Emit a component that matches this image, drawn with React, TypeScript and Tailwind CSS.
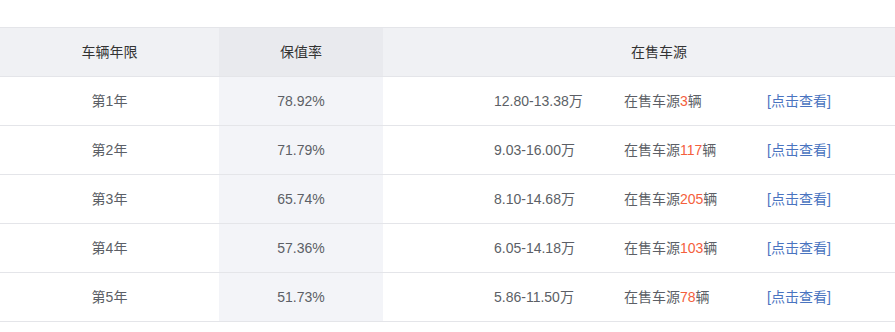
import React from "react";

interface Row {
  year: string;
  rate: string;
  price: string;
  count: string;
}

const ROWS: Row[] = [
  { year: "第1年", rate: "78.92%", price: "12.80-13.38万", count: "3" },
  { year: "第2年", rate: "71.79%", price: "9.03-16.00万", count: "117" },
  { year: "第3年", rate: "65.74%", price: "8.10-14.68万", count: "205" },
  { year: "第4年", rate: "57.36%", price: "6.05-14.18万", count: "103" },
  { year: "第5年", rate: "51.73%", price: "5.86-11.50万", count: "78" },
];

export default function App() {
  return (
    <div
      className="w-[895px] h-[332px] bg-white pt-[27px] text-[14px]"
      style={{ fontFamily: '"Liberation Sans", "Noto Sans CJK SC", sans-serif' }}
    >
      <div className="border-t border-[#e4e5e9]">
        <div className="grid grid-cols-[219px_164px_1fr] h-[49px] border-b border-[#e4e5e9] bg-[#f0f1f4] text-[#333]">
          <div className="flex items-center justify-center">车辆年限</div>
          <div className="flex items-center justify-center bg-[#e9eaee]">保值率</div>
          <div className="flex items-center justify-center pl-[40px]">在售车源</div>
        </div>
        {ROWS.map((row) => (
          <div
            key={row.year}
            className="grid grid-cols-[219px_164px_1fr] h-[49px] border-b border-[#e4e5e9] text-[#5c5f66]"
          >
            <div className="flex items-center justify-center">{row.year}</div>
            <div className="flex items-center justify-center bg-[#f3f4f8]">{row.rate}</div>
            <div className="flex items-center pl-[111px]">
              <span className="w-[130px]">{row.price}</span>
              <span className="w-[143px]">
                在售车源<span className="text-[#f4603c]">{row.count}</span>辆
              </span>
              <a className="text-[#4a74c0] cursor-pointer">[点击查看]</a>
            </div>
          </div>
        ))}
      </div>
    </div>
  );
}
